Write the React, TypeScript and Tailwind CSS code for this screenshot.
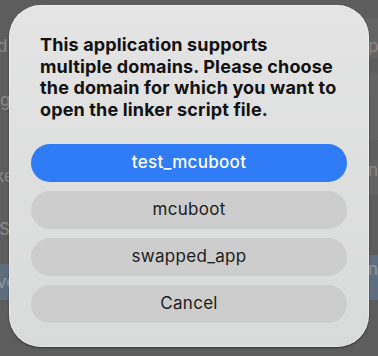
import React from 'react';

const options = ['test_mcuboot', 'mcuboot', 'swapped_app', 'Cancel'];

export default function App() {
  return (
    <div
      className="relative w-[378px] h-[356px] overflow-hidden bg-[#5d5d5d] flex justify-between"
      style={{ fontFamily: 'Inter, "Liberation Sans", sans-serif' }}
    >
      {/* window behind the sheet: left column */}
      <div className="w-[12px] flex flex-col text-[17px] leading-[20px] text-[#8a8a8a] overflow-hidden">
        <div className="h-[36px]" />
        <div className="h-[54px] -ml-[3px]">d</div>
        <div className="h-[76px] -ml-[4px]">ig</div>
        <div className="h-[53px] -ml-[5px]">ke</div>
        <div className="h-[45px] -ml-[1px]">S</div>
        <div className="h-[36px] bg-[#5f6e7e] text-[#8f9aa6] pt-[8px]">
          <span className="-ml-[3px]">ve</span>
        </div>
      </div>
      {/* right column */}
      <div className="w-[12px] flex flex-col text-[17px] leading-[20px] text-[#8a8a8a] overflow-hidden">
        <div className="h-[18px]" />
        <div className="h-[40px] bg-[#646464] pt-[18px] pl-[2px]">p</div>
        <div className="h-[15px]" />
        <div className="h-[67px] bg-[#636363]" />
        <div className="h-[20px]" />
        <div className="h-[35px] bg-[#646464] pl-[2px]">n</div>
        <div className="h-[60px]" />
        <div className="h-[45px] bg-[#5f6e7e] text-[#8f9aa6] pt-[4px] pl-[2px]">n</div>
      </div>

      {/* dialog */}
      <div className="absolute left-[9px] top-[5px] w-[360px] h-[342px] rounded-[32px] bg-gradient-to-b from-[#e4e4e4] to-[#d9dada] shadow-[0_1px_2px_rgba(0,0,0,0.45),inset_0_0_0_1px_rgba(255,255,255,0.35)] flex flex-col px-[22px] pt-[29px]">
        <p className="px-[9px] text-[18px] leading-[21.7px] font-bold text-[#111111] tracking-[0.15px]">
          This application supports
          <br />
          multiple domains. Please choose
          <br />
          the domain for which you want to
          <br />
          open the linker script file.
        </p>
        <div className="mt-[23px] flex flex-col gap-[9px]">
          {options.map((o, i) => (
            <button
              key={o}
              className={
                i === 0
                  ? 'h-[38px] rounded-full bg-[#2f7cf6] text-white text-[17px] font-medium tracking-[0.3px]'
                  : 'h-[38px] rounded-full bg-[#cdcdcd] text-[#1c1c1c] text-[17px] tracking-[0.3px]'
              }
            >
              {o}
            </button>
          ))}
        </div>
      </div>
    </div>
  );
}
